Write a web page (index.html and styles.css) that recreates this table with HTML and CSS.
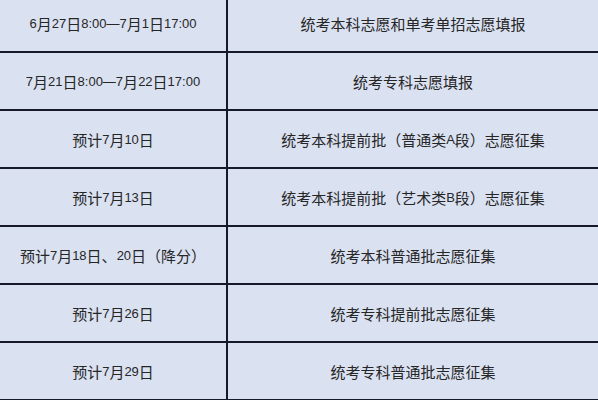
FILE: index.html
```html
<!DOCTYPE html>
<html lang="zh-CN">
<head>
<meta charset="utf-8">
<title>志愿填报时间安排</title>
<link rel="stylesheet" href="styles.css">
</head>
<body>
<div class="table">
  <div class="row">
    <div class="cell date"><span class="n">6</span>月<span class="n">27</span>日<span class="n">8:00—7</span>月<span class="n">1</span>日<span class="n">17:00</span></div>
    <div class="cell">统考本科志愿和单考单招志愿填报</div>
  </div>
  <div class="row">
    <div class="cell date"><span class="n">7</span>月<span class="n">21</span>日<span class="n">8:00—7</span>月<span class="n">22</span>日<span class="n">17:00</span></div>
    <div class="cell">统考专科志愿填报</div>
  </div>
  <div class="row">
    <div class="cell date">预计<span class="n">7</span>月<span class="n">10</span>日</div>
    <div class="cell">统考本科提前批（普通类<span class="n">A</span>段）志愿征集</div>
  </div>
  <div class="row">
    <div class="cell date">预计<span class="n">7</span>月<span class="n">13</span>日</div>
    <div class="cell">统考本科提前批（艺术类<span class="n">B</span>段）志愿征集</div>
  </div>
  <div class="row">
    <div class="cell date">预计<span class="n">7</span>月<span class="n">18</span>日、<span class="n">20</span>日（降分）</div>
    <div class="cell">统考本科普通批志愿征集</div>
  </div>
  <div class="row">
    <div class="cell date">预计<span class="n">7</span>月<span class="n">26</span>日</div>
    <div class="cell">统考专科提前批志愿征集</div>
  </div>
  <div class="row">
    <div class="cell date">预计<span class="n">7</span>月<span class="n">29</span>日</div>
    <div class="cell">统考专科普通批志愿征集</div>
  </div>
</div>
</body>
</html>
```

FILE: styles.css
```css
html, body {
  margin: 0;
  padding: 0;
  background: #dae1f1;
  overflow: hidden;
}

body {
  width: 598px;
  height: 400px;
  font-family: "Noto Sans CJK SC", sans-serif;
  font-size: 15px;
  color: #262626;
}

.table {
  margin-top: -5px;
}

.row {
  display: grid;
  grid-template-columns: 228px 1fr;
  height: 58px;
  box-sizing: border-box;
  border-bottom: 2px solid #161a28;
}

.cell {
  display: flex;
  align-items: center;
  justify-content: center;
  white-space: nowrap;
  line-height: 1;
  padding-top: 1px;
}

.date {
  border-right: 2px solid #161a28;
}

.n {
  font-family: "Liberation Sans", sans-serif;
  font-size: 13px;
}
```
